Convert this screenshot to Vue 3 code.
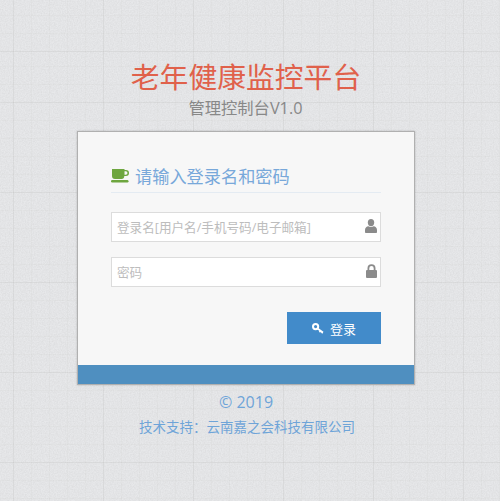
<script setup>
const fields = [
  { placeholder: '登录名[用户名/手机号码/电子邮箱]', type: 'text', icon: 'user' },
  { placeholder: '密码', type: 'password', icon: 'lock' }
]
</script>

<template>
  <div class="page">
    <svg class="noise" width="500" height="501" aria-hidden="true">
      <filter id="grain" x="0" y="0" width="100%" height="100%">
        <feTurbulence type="fractalNoise" baseFrequency="0.75" numOctaves="2" seed="4" />
        <feColorMatrix type="matrix" values="0 0 0 0 0.55  0 0 0 0 0.55  0 0 0 0 0.56  0.5 0 0 0 -0.14" />
      </filter>
      <rect width="500" height="501" filter="url(#grain)" />
    </svg>
    <div class="col">
      <h1 class="title">老年健康监控平台</h1>
      <div class="subtitle">管理控制台V1.0</div>
      <div class="card">
        <div class="card-body">
          <h4 class="heading">
            <svg class="cup" width="18" height="15" viewBox="0 0 18 15">
              <path fill="#6ea63f" fill-rule="evenodd" d="M1 1h12.500v1h1.500a2.800 2.800 0 0 1 0 6h-1.700a3 3 0 0 1-2.800 3H4a3 3 0 0 1-3-3zM13.500 3.300v3.400h1.300a1.700 1.700 0 0 0 0-3.400z" />
              <rect x="0" y="12" width="17.500" height="2.500" rx="1.200" fill="#6ea63f" />
            </svg>
            <span>请输入登录名和密码</span>
          </h4>
          <form class="form" @submit.prevent>
            <label v-for="f in fields" :key="f.icon" class="field">
              <input class="input" :type="f.type" :placeholder="f.placeholder" />
              <svg v-if="f.icon === 'user'" class="ficon" width="12" height="14" viewBox="0 0 12 14">
                <ellipse cx="6" cy="3.600" rx="3.200" ry="3.600" fill="#8b8b8b" />
                <path fill="#8b8b8b" d="M0.800 14c-.5 0-.8-.3-.8-.8V11c0-2.200 1.400-3.600 3.400-3.800.7.500 1.600.8 2.600.8s1.900-.3 2.600-.8C10.600 7.400 12 8.800 12 11v2.200c0 .5-.3.8-.8.8z" />
              </svg>
              <svg v-else class="ficon" width="11" height="14" viewBox="0 0 11 14">
                <path fill="none" stroke="#8b8b8b" stroke-width="1.800" d="M2.400 7V4.200a3.100 3.100 0 0 1 6.200 0V7" />
                <rect x="0" y="6" width="11" height="8" rx="1" fill="#8b8b8b" />
              </svg>
            </label>
            <div class="actions">
              <button class="btn" type="submit">
                <svg width="12" height="11" viewBox="0 0 12 11">
                  <circle cx="3.600" cy="3.600" r="2.600" fill="none" stroke="#fff" stroke-width="2" />
                  <path d="M5.500 5.500L11 9.500M8.500 7.700l-1 1.500M10.500 9l-.8 1.200" fill="none" stroke="#fff" stroke-width="1.600" />
                </svg>
                <span>登录</span>
              </button>
            </div>
          </form>
        </div>
        <div class="card-bar"></div>
      </div>
      <div class="copy">© 2019</div>
      <div class="support">技术支持：云南嘉之会科技有限公司</div>
    </div>
  </div>
</template>

<style>
html, body { margin: 0; padding: 0; }
</style>

<style scoped>
.page {
  position: relative;
  height: 501px;
  overflow: hidden;
  box-sizing: border-box;
  padding: 59px 0 0 77px;
  background-color: #e7e8ea;
  background-image:
    repeating-linear-gradient(0deg, rgba(170, 170, 170, 0.14) 0 1px, transparent 1px 90px),
    repeating-linear-gradient(90deg, rgba(170, 170, 170, 0.14) 0 1px, transparent 1px 90px),
    repeating-linear-gradient(0deg, rgba(180, 180, 180, 0.07) 0 1px, transparent 1px 18px),
    repeating-linear-gradient(90deg, rgba(180, 180, 180, 0.07) 0 1px, transparent 1px 18px);
  background-position: 13px 52px;
  font-family: "Open Sans", "Noto Sans CJK SC", sans-serif;
}
.noise {
  position: absolute;
  left: 0;
  top: 0;
}
.col {
  position: relative;
  width: 338px;
  display: flex;
  flex-direction: column;
  align-items: stretch;
  text-align: center;
}
.title {
  margin: 0;
  font-size: 28.800px;
  line-height: 36px;
  font-weight: 400;
  color: #e0614b;
}
.subtitle {
  margin: 2px 0 0 -1px;
  font-size: 16.300px;
  line-height: 22px;
  color: #888;
}
.card {
  margin-top: 12px;
  height: 254px;
  box-sizing: border-box;
  display: flex;
  flex-direction: column;
  border: 1px solid #b0b0b0;
  background: #f7f7f7;
  box-shadow: 0 0 2px rgba(0, 0, 0, 0.2);
  text-align: left;
}
.card-body {
  flex: 1;
  padding: 26px 33px 0;
}
.card-bar {
  height: 19px;
  background: #4f8fc0;
}
.heading {
  margin: 0;
  display: flex;
  align-items: center;
  gap: 6px;
  height: 34px;
  border-bottom: 1px solid #e4ebf2;
  font-size: 17.200px;
  font-weight: 400;
  color: #78a8da;
}
.form {
  margin-top: 19px;
  display: flex;
  flex-direction: column;
  gap: 15px;
}
.field {
  position: relative;
  display: block;
  height: 30px;
}
.input {
  display: block;
  width: 100%;
  height: 30px;
  box-sizing: border-box;
  padding: 0 25px 0 5px;
  border: 1px solid #dcdcdc;
  border-radius: 0;
  background: #fff;
  font: 12.600px "Open Sans", "Noto Sans CJK SC", sans-serif;
  outline: none;
}
.input::placeholder { color: #bdbdbd; opacity: 1; }
.ficon {
  position: absolute;
  right: 4px;
  top: 7px;
}
.actions {
  display: flex;
  justify-content: flex-end;
  margin-top: 10px;
}
.btn {
  width: 94px;
  height: 32px;
  display: flex;
  align-items: center;
  justify-content: center;
  gap: 6px;
  padding: 0;
  border: 0;
  background: #428bca;
  color: #fff;
  font: 13px "Open Sans", "Noto Sans CJK SC", sans-serif;
}
.copy {
  margin: 6px 0 0;
  font-size: 16px;
  line-height: 22px;
  color: #6ea4d8;
}
.support {
  margin: 4px 0 0 2px;
  font-size: 13.500px;
  line-height: 20px;
  color: #6ea4d8;
}
</style>
